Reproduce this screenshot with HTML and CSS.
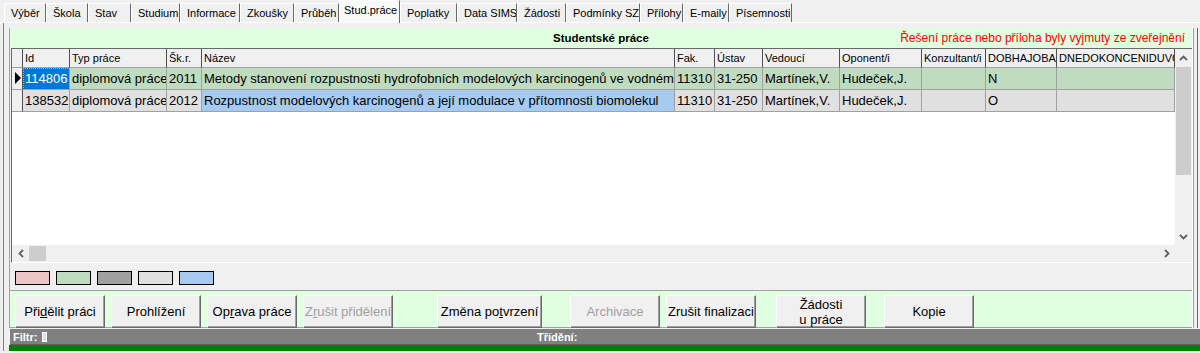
FILE: index.html
```html
<!DOCTYPE html>
<html lang="cs">
<head>
    <meta charset="UTF-8">
    <title>Studentské práce</title>
    <link rel="stylesheet" href="styles.css">
</head>
<body>

<!-- Záložky -->
<div class="tabs">
    <span class="tab">Výběr</span>
    <span class="tab">Škola</span>
    <span class="tab">Stav</span>
    <span class="tab">Studium</span>
    <span class="tab">Informace</span>
    <span class="tab">Zkoušky</span>
    <span class="tab">Průběh</span>
    <span class="tab active">Stud.práce</span>
    <span class="tab">Poplatky</span>
    <span class="tab">Data SIMS</span>
    <span class="tab">Žádosti</span>
    <span class="tab">Podmínky SZ</span>
    <span class="tab">Přílohy</span>
    <span class="tab">E-maily</span>
    <span class="tab">Písemnosti</span>
</div>

<div class="frame">
    <div class="main">
        <div class="caption">
            <span class="caption-title">Studentské práce</span>
            <span class="caption-note">Řešení práce nebo příloha byly vyjmuty ze zveřejnění</span>
        </div>

        <!-- Tabulka prací -->
        <div class="grid">
            <div class="grid-main">
                <div class="grid-body">
                    <div class="grid-table">
                        <div class="hd ind"></div>
                        <div class="hd">Id</div>
                        <div class="hd">Typ práce</div>
                        <div class="hd">Šk.r.</div>
                        <div class="hd">Název</div>
                        <div class="hd">Fak.</div>
                        <div class="hd">Ústav</div>
                        <div class="hd">Vedoucí</div>
                        <div class="hd">Oponent/i</div>
                        <div class="hd">Konzultant/i</div>
                        <div class="hd">DOBHAJOBA</div>
                        <div class="hd">DNEDOKONCENIDUVOD</div>

                        <div class="cell ind"><span class="pointer"></span></div>
                        <div class="cell green selected">114806</div>
                        <div class="cell green">diplomová práce</div>
                        <div class="cell green">2011</div>
                        <div class="cell green">Metody stanovení rozpustnosti hydrofobních modelových karcinogenů ve vodném prostředí</div>
                        <div class="cell green">11310</div>
                        <div class="cell green">31-250</div>
                        <div class="cell green">Martínek,V.</div>
                        <div class="cell green">Hudeček,J.</div>
                        <div class="cell green"></div>
                        <div class="cell green">N</div>
                        <div class="cell green"></div>

                        <div class="cell ind"></div>
                        <div class="cell gray">138532</div>
                        <div class="cell gray">diplomová práce</div>
                        <div class="cell gray">2012</div>
                        <div class="cell blue">Rozpustnost modelových karcinogenů a její modulace v přítomnosti biomolekul</div>
                        <div class="cell gray">11310</div>
                        <div class="cell gray">31-250</div>
                        <div class="cell gray">Martínek,V.</div>
                        <div class="cell gray">Hudeček,J.</div>
                        <div class="cell gray"></div>
                        <div class="cell gray">O</div>
                        <div class="cell gray"></div>
                    </div>
                </div>
                <div class="vscroll">
                    <div class="arrow">
                        <svg width="9" height="6" viewBox="0 0 9 6"><path d="M1 5 L4.5 1.5 L8 5" fill="none" stroke="#606060" stroke-width="1.8"/></svg>
                    </div>
                    <div class="vthumb"></div>
                    <div class="vtrack"></div>
                    <div class="arrow">
                        <svg width="9" height="6" viewBox="0 0 9 6"><path d="M1 1 L4.5 4.5 L8 1" fill="none" stroke="#606060" stroke-width="1.8"/></svg>
                    </div>
                </div>
            </div>
            <div class="hscroll">
                <div class="arrow">
                    <svg width="6" height="9" viewBox="0 0 6 9"><path d="M5 1 L1.5 4.5 L5 8" fill="none" stroke="#606060" stroke-width="1.8"/></svg>
                </div>
                <div class="hthumb"></div>
                <div class="htrack"></div>
                <div class="arrow">
                    <svg width="6" height="9" viewBox="0 0 6 9"><path d="M1 1 L4.5 4.5 L1 8" fill="none" stroke="#606060" stroke-width="1.8"/></svg>
                </div>
                <div class="corner"></div>
            </div>
        </div>

        <!-- Legenda barev -->
        <div class="legend">
            <span class="swatch pink"></span>
            <span class="swatch green"></span>
            <span class="swatch dark"></span>
            <span class="swatch gray"></span>
            <span class="swatch blue"></span>
        </div>

        <!-- Tlačítka -->
        <div class="buttons">
            <button class="btn">Při<u>d</u>ělit práci</button>
            <button class="btn">Prohlížení</button>
            <button class="btn">Op<u>r</u>ava práce</button>
            <button class="btn" disabled>Z<u>r</u>ušit přidělení</button>
            <button class="btn btn-change">Změna po<u>t</u>vrzení</button>
            <button class="btn btn-archive" disabled>Archivace</button>
            <button class="btn">Zrušit finalizaci</button>
            <button class="btn btn-requests">Žádosti<br>u práce</button>
            <button class="btn btn-copy">Kopie</button>
        </div>
    </div>

    <div class="status">
        <span class="status-filter">Filtr:</span>
        <span class="filter-box"></span>
        <span class="status-sort">Třídění:</span>
    </div>
    <div class="green-bar"></div>
</div>

</body>
</html>
```

FILE: styles.css
```css
/* celková stránka */
body {
    margin: 0;
    width: 1200px;
    height: 353px;
    overflow: hidden;
    background-color: #f0f0f0;
    font-family: "Liberation Sans", Arial, sans-serif;
    color: #000;
}

/* záložky */
.tabs {
    display: grid;
    grid-template-columns: 42px 42px 43px 49px 60px 54px 45px 61px 57px 60px 49px 74px 43px 46px 63px;
    align-items: end;
    height: 22px;
    padding-left: 4px;
    border-bottom: 1px solid #fff;
}

.tab {
    box-sizing: border-box;
    height: 19px;
    padding-left: 6px;
    border-top: 1px solid #fff;
    border-left: 1px solid #fff;
    border-right: 1px solid #696969;
    font-size: 11px;
    line-height: 18px;
    white-space: nowrap;
    overflow: hidden;
}

.tab.active {
    height: 23px;
    margin-bottom: -1px;
    padding-left: 4px;
    background-color: #f9f9f9;
    line-height: 18px;
}

/* rám */
.frame {
    margin-left: 3px;
    padding-top: 5px;
    padding-left: 5px;
    border-left: 1px solid #808080;
}

.main {
    width: 1182px;
    border-left: 1px solid #a0a0a0;
    box-shadow: 1px 0 0 #fff, 2px 0 0 #a0a0a0, 5px 0 0 #f0f0f0, 6px 0 0 #696969;
}

.caption {
    display: flex;
    justify-content: flex-end;
    position: relative;
    height: 20px;
    background-color: #e0ffe0;
    line-height: 20px;
}

.caption-title {
    position: absolute;
    left: 543px;
    font-size: 11.5px;
    font-weight: bold;
}

.caption-note {
    padding-right: 7px;
    font-size: 12px;
    color: #f00;
}

/* tabulka */
.grid {
    margin-left: 1px;
    border-top: 1px solid #696969;
    border-left: 1px solid #696969;
    border-bottom: 1px solid #fff;
}

.grid-main {
    display: flex;
    height: 196px;
}

.grid-body {
    width: 1163px;
    background-color: #fff;
    overflow: hidden;
    border-bottom-right-radius: 3px;
}

.grid-table {
    display: grid;
    grid-template-columns: 11px 47px 97px 35px 473px 40px 48px 77px 82px 64px 71px 118px;
    grid-template-rows: 19px 22px 22px;
}

.hd,
.cell {
    box-sizing: border-box;
    padding-left: 2px;
    white-space: nowrap;
    overflow: hidden;
}

.hd {
    background-color: #f0f0f0;
    border-right: 1px solid #505050;
    border-bottom: 1px solid #a0a0a0;
    font-size: 11px;
    line-height: 18px;
}

.cell {
    border-right: 1px solid #a0a0a0;
    border-bottom: 1px solid #a0a0a0;
    font-size: 13px;
    line-height: 21px;
}

.ind {
    position: relative;
    padding: 0;
    background-color: #f0f0f0;
    border-right: 1px solid #505050;
}

.pointer {
    position: absolute;
    left: 3px;
    top: 4px;
    border-top: 6px solid transparent;
    border-bottom: 6px solid transparent;
    border-left: 6px solid #000;
}

.cell.green { background-color: #c0dcc0; }
.cell.gray { background-color: #e0e0e0; }
.cell.blue { background-color: #a6caf0; }

.cell.selected {
    background-color: #0078d7;
    color: #fff;
    outline: 1px dotted #f0a030;
    outline-offset: -1px;
}

/* posuvníky */
.vscroll {
    display: flex;
    flex-direction: column;
    width: 17px;
    background-color: #f0f0f0;
}

.vscroll .arrow {
    display: flex;
    align-items: center;
    justify-content: center;
    height: 17px;
}

.vthumb {
    height: 108px;
    margin: 1px 1px 0;
    background-color: #cdcdcd;
}

.vtrack {
    flex: 1;
}

.hscroll {
    display: flex;
    height: 17px;
    background-color: #f0f0f0;
}

.hscroll .arrow {
    display: flex;
    align-items: center;
    justify-content: center;
    width: 17px;
}

.hthumb {
    width: 17px;
    margin: 1px 0;
    background-color: #cdcdcd;
}

.htrack {
    flex: 1;
}

.corner {
    width: 17px;
}

/* legenda */
.legend {
    display: flex;
    gap: 6px;
    height: 27px;
    padding-left: 5px;
    padding-top: 8px;
    box-sizing: border-box;
}

.swatch {
    width: 35px;
    height: 14px;
    box-sizing: border-box;
    border: 1px solid #000;
}

.swatch.pink { background-color: #ecc6c6; }
.swatch.green { background-color: #c0dcc0; }
.swatch.dark { background-color: #a0a0a0; }
.swatch.gray { background-color: #e0e0e0; }
.swatch.blue { background-color: #a6caf0; }

/* tlačítka */
.buttons {
    display: flex;
    gap: 6px;
    height: 38px;
    padding: 4px 0 0 5px;
    box-sizing: border-box;
    background-color: #e0ffe0;
    border-top: 1px solid #a0a0a0;
    border-bottom: 1px solid #a0a0a0;
}

.btn {
    width: 90px;
    height: 33px;
    padding: 0;
    background-color: #f0f0f0;
    border: 1px solid;
    border-color: #fff #696969 #696969 #fff;
    box-shadow: inset -1px -1px 0 #a0a0a0;
    font-family: "Liberation Sans", Arial, sans-serif;
    font-size: 13px;
    color: #000;
    line-height: 15px;
    white-space: nowrap;
}

.btn:disabled {
    color: #a0a0a0;
}

.btn-change {
    width: 105px;
    margin-left: 38px;
}

.btn-archive { margin-left: 22px; }
.btn-requests { margin-left: 14px; }
.btn-copy { margin-left: 12px; }

/* stavový řádek */
.status {
    display: flex;
    align-items: center;
    position: relative;
    height: 15px;
    margin: 1px 0 0 1px;
    padding-left: 3px;
    background-color: #808080;
    border-bottom: 1px solid #606060;
    color: #fff;
    font-size: 11px;
    font-weight: bold;
}

.filter-box {
    width: 3px;
    height: 8px;
    margin-left: 5px;
    background-color: #d0e4f8;
    border: 1px solid #fff;
}

.status-sort {
    position: absolute;
    left: 527px;
}

.green-bar {
    height: 6px;
    background-color: #008000;
}
```
